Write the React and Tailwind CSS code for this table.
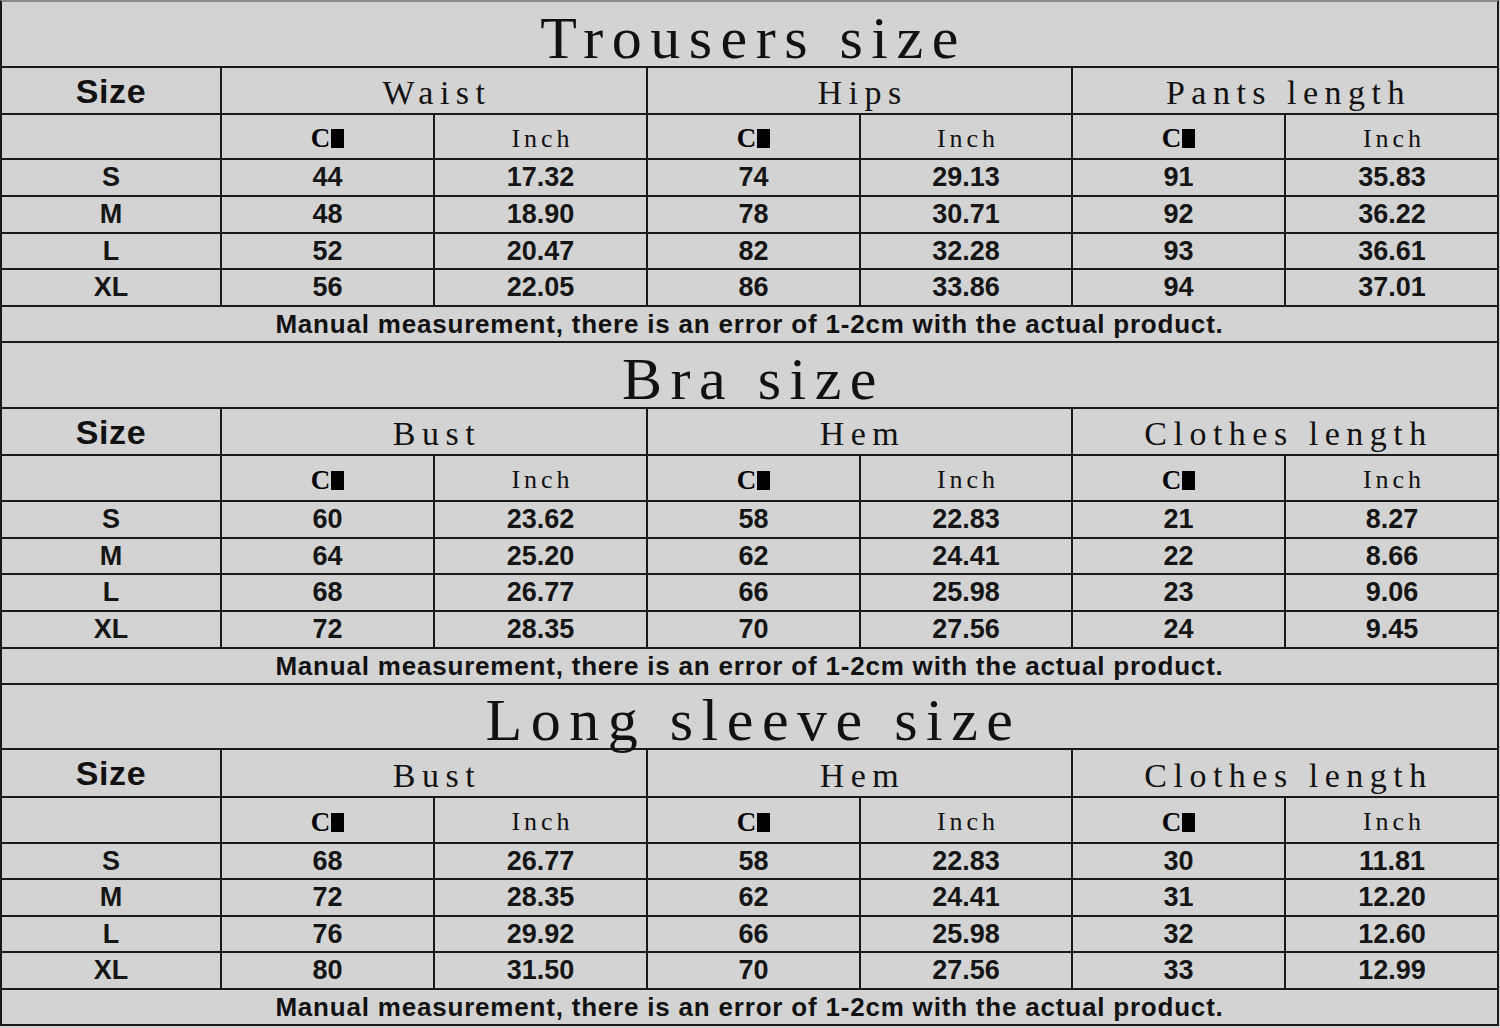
const COLS = "grid grid-cols-[220px_213px_213px_213px_212px_213px_212px]";
const serif = "font-['Liberation_Serif','Times_New_Roman',serif]";
const sans = "font-['Liberation_Sans',Arial,sans-serif]";

const tables = [
  {
    title: "Trousers size",
    heads: ["Waist", "Hips", "Pants length"],
    h: { title: "h-[66px]", head: "h-[47px]", sub: "h-[45px]", rows: ["h-[37px]", "h-[37px]", "h-[36px]", "h-[37px]"], note: "h-[36px]" },
    rows: [
      ["S", "44", "17.32", "74", "29.13", "91", "35.83"],
      ["M", "48", "18.90", "78", "30.71", "92", "36.22"],
      ["L", "52", "20.47", "82", "32.28", "93", "36.61"],
      ["XL", "56", "22.05", "86", "33.86", "94", "37.01"],
    ],
  },
  {
    title: "Bra size",
    heads: ["Bust", "Hem", "Clothes length"],
    h: { title: "h-[66px]", head: "h-[47px]", sub: "h-[46px]", rows: ["h-[37px]", "h-[36px]", "h-[37px]", "h-[37px]"], note: "h-[36px]" },
    rows: [
      ["S", "60", "23.62", "58", "22.83", "21", "8.27"],
      ["M", "64", "25.20", "62", "24.41", "22", "8.66"],
      ["L", "68", "26.77", "66", "25.98", "23", "9.06"],
      ["XL", "72", "28.35", "70", "27.56", "24", "9.45"],
    ],
  },
  {
    title: "Long sleeve size",
    heads: ["Bust", "Hem", "Clothes length"],
    h: { title: "h-[65px]", head: "h-[48px]", sub: "h-[46px]", rows: ["h-[36px]", "h-[37px]", "h-[36px]", "h-[37px]"], note: "h-[36px]" },
    rows: [
      ["S", "68", "26.77", "58", "22.83", "30", "11.81"],
      ["M", "72", "28.35", "62", "24.41", "31", "12.20"],
      ["L", "76", "29.92", "66", "25.98", "32", "12.60"],
      ["XL", "80", "31.50", "70", "27.56", "33", "12.99"],
    ],
  },
];

// the "M" of CM prints as a solid block in the source chart
const Cm = () => (
  <span className={`${serif} font-bold text-[27px] leading-none flex items-center`}>
    C
    <span className="inline-flex items-center justify-center w-[13px] h-[19px] bg-black text-black text-[9px] ml-[1px]">M</span>
  </span>
);

const SizeTable = ({ t }) => (
  <div>
    <div className={`${t.h.title} border-b-2 border-[#1a1a1a] flex items-end justify-center`}>
      <span className={`${serif} text-[60px] leading-none tracking-[8.5px] pl-[8px] text-[#111] translate-y-[2px]`}>
        {t.title}
      </span>
    </div>

    <div className={`${COLS} ${t.h.head} border-b-2 border-[#1a1a1a]`}>
      <div className="border-r-2 border-[#1a1a1a] flex items-center justify-center">
        <span className={`${sans} font-bold text-[34px] leading-none tracking-[0.6px] text-[#111]`}>Size</span>
      </div>
      {t.heads.map((hd, i) => (
        <div
          key={hd}
          className={`col-span-2 flex items-end justify-center pb-[3px] ${i < 2 ? "border-r-2 border-[#1a1a1a]" : ""}`}
        >
          <span className={`${serif} text-[34px] leading-none tracking-[6.5px] pl-[6px] text-[#111]`}>{hd}</span>
        </div>
      ))}
    </div>

    <div className={`${COLS} ${t.h.sub} border-b-2 border-[#1a1a1a]`}>
      <div className="border-r-2 border-[#1a1a1a]" />
      {[0, 1, 2].map((i) => (
        <div key={i} className="contents">
          <div className="border-r-2 border-[#1a1a1a] flex items-center justify-center pt-[4px]">
            <Cm />
          </div>
          <div className={`flex items-center justify-center pt-[4px] ${i < 2 ? "border-r-2 border-[#1a1a1a]" : ""}`}>
            <span className={`${serif} text-[26px] leading-none tracking-[4px] pl-[4px] text-[#111]`}>Inch</span>
          </div>
        </div>
      ))}
    </div>

    {t.rows.map((r, ri) => (
      <div key={r[0]} className={`${COLS} ${t.h.rows[ri]} border-b-2 border-[#1a1a1a]`}>
        {r.map((v, ci) => (
          <div
            key={ci}
            className={`flex items-center justify-center ${ci < 6 ? "border-r-2 border-[#1a1a1a]" : ""}`}
          >
            <span className={`${sans} font-bold text-[27px] leading-none text-[#151515]`}>{v}</span>
          </div>
        ))}
      </div>
    ))}

    <div className={`${t.h.note} border-b-2 border-[#1a1a1a] flex items-center justify-center`}>
      <span className={`${sans} font-bold text-[26px] leading-none tracking-[0.8px] text-[#111]`}>
        Manual measurement, there is an error of 1-2cm with the actual product.
      </span>
    </div>
  </div>
);

export default function App() {
  return (
    <div className="w-[1500px] h-[1028px] bg-[#d3d3d3] overflow-hidden">
      <div className="w-[1499px] border-t-2 border-t-[#8a8a8a] border-l-2 border-r-2 border-[#1a1a1a]">
        {tables.map((t) => (
          <SizeTable key={t.title} t={t} />
        ))}
      </div>
    </div>
  );
}
